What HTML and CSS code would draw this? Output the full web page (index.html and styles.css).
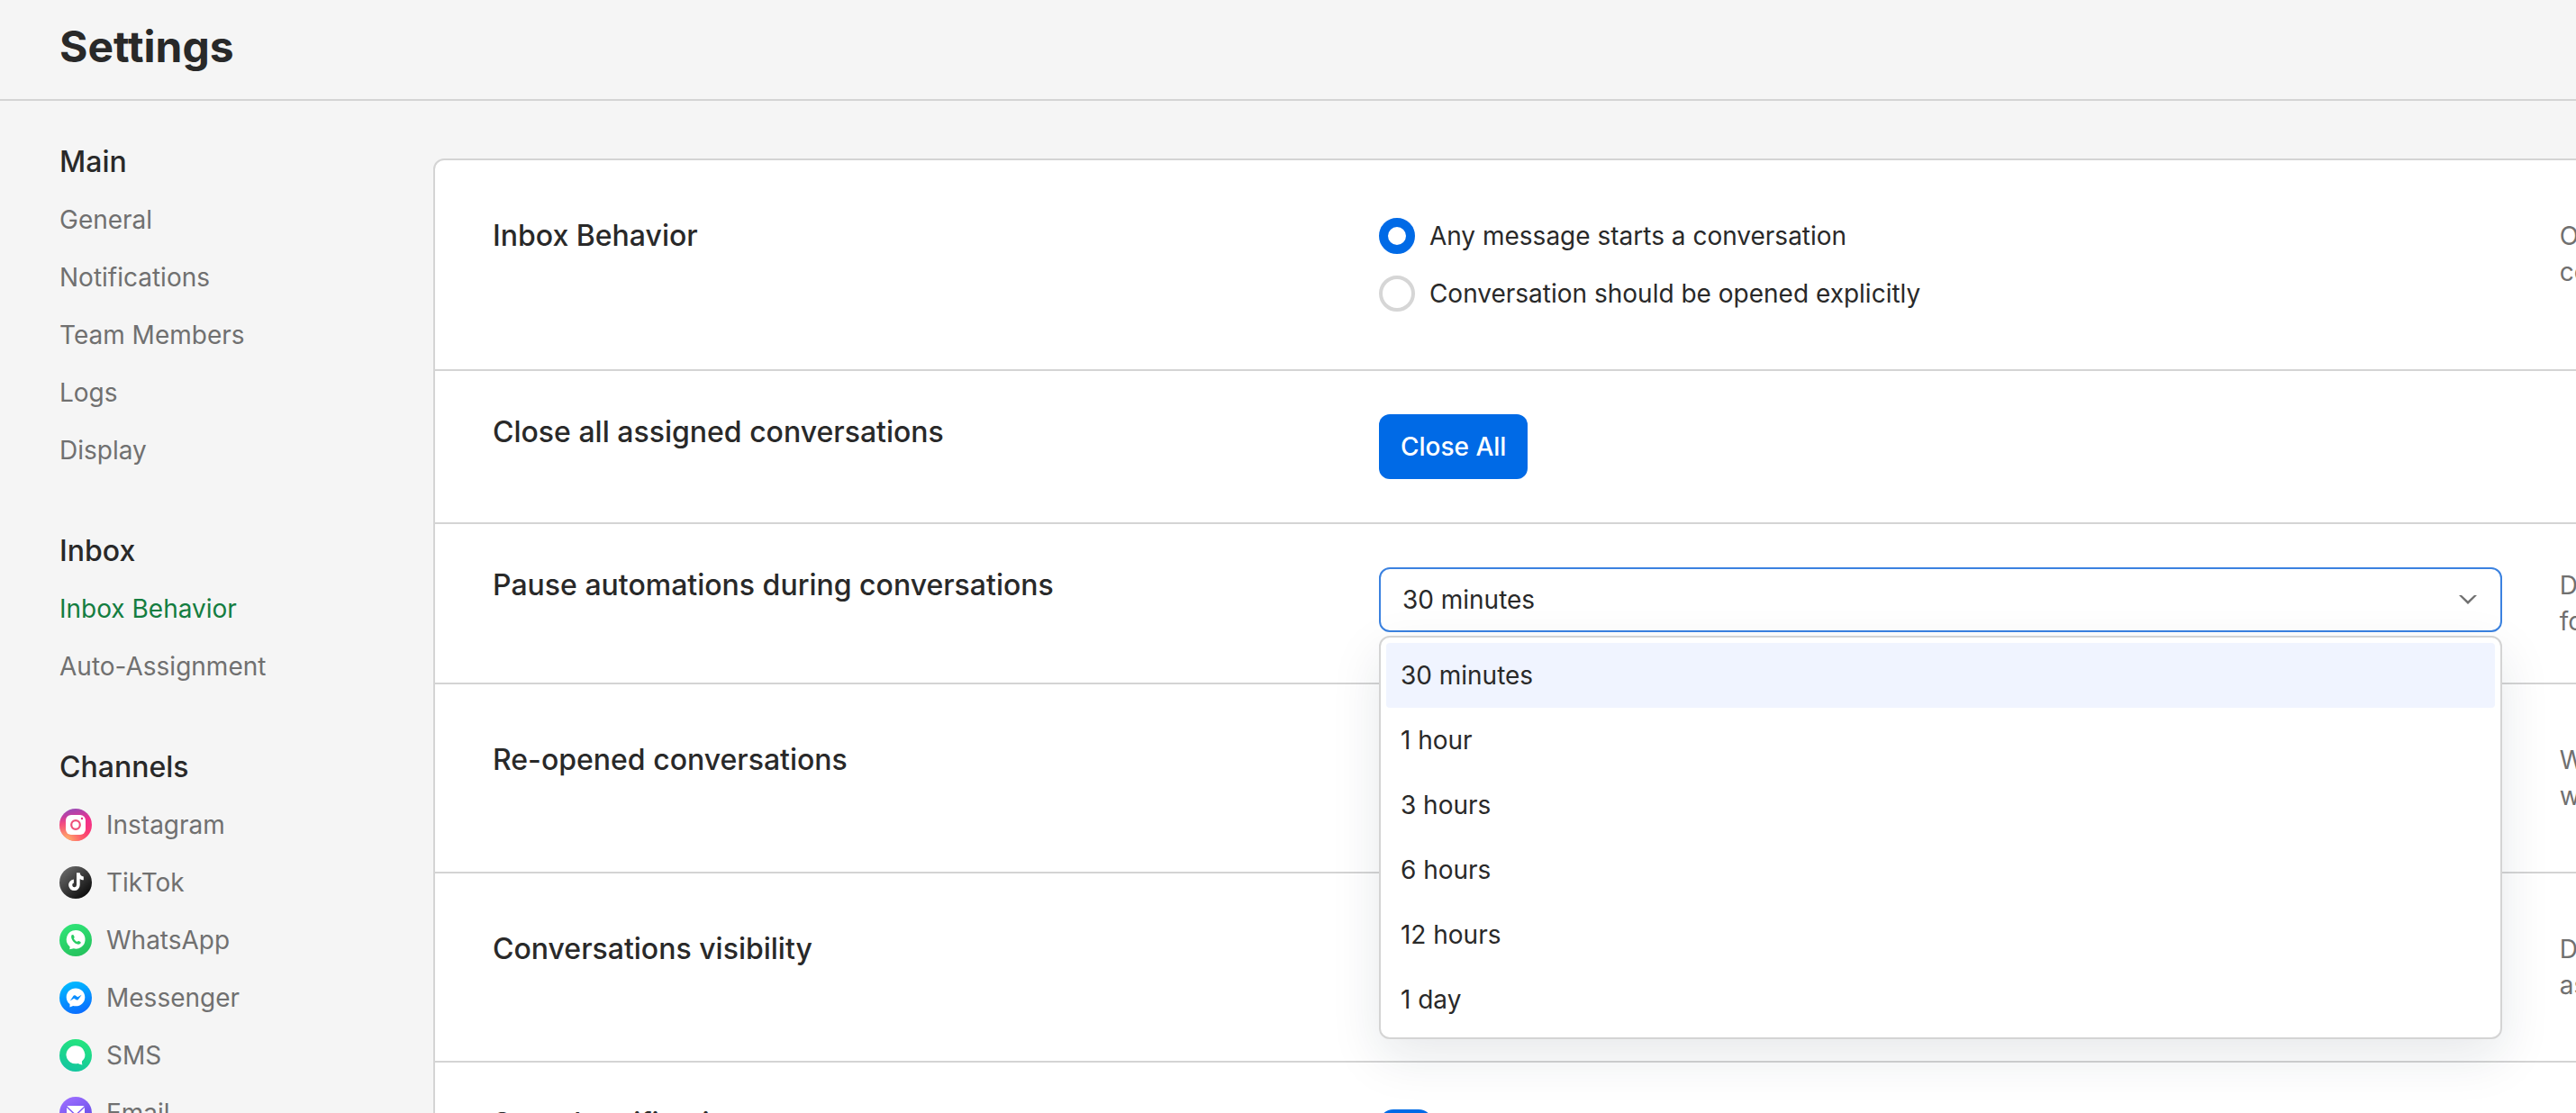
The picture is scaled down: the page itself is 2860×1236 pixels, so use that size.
FILE: index.html
```html
<!doctype html>
<html lang="en">
    <head>
        <meta charset="utf-8">
        <title>Settings</title>
        <link rel="stylesheet" href="styles.css">
    </head>
    <body>
        <header class="header">
            <h1>Settings</h1>
        </header>
        <div class="layout">
            <nav class="sidebar">
                <section>
                    <h2>Main</h2>
                    <a href="#general">General</a>
                    <a href="#notifications">Notifications</a>
                    <a href="#team">Team Members</a>
                    <a href="#logs">Logs</a>
                    <a href="#display">Display</a>
                </section>
                <section>
                    <h2>Inbox</h2>
                    <a href="#behavior" class="active">Inbox Behavior</a>
                    <a href="#assignment">Auto-Assignment</a>
                </section>
                <section>
                    <h2>Channels</h2>
                    <a href="#instagram">
                        <svg class="icon" viewBox="0 0 36 36">
                            <defs>
                                <linearGradient id="ig" x1="0.4" y1="0" x2="0.6" y2="1">
                                    <stop offset="0" stop-color="#9a4bb5" />
                                    <stop offset="0.4" stop-color="#f0308c" />
                                    <stop offset="1" stop-color="#ff3f6c" />
                                </linearGradient>
                                <radialGradient id="ig-warm" cx="0.2" cy="1" r="0.75">
                                    <stop offset="0" stop-color="#ffc46b" />
                                    <stop offset="1" stop-color="#ff8a5c" stop-opacity="0" />
                                </radialGradient>
                            </defs>
                            <circle cx="18" cy="18" r="18" fill="url(#ig)" />
                            <circle cx="18" cy="18" r="18" fill="url(#ig-warm)" />
                            <rect x="7" y="7" width="22" height="22" rx="6" fill="#fff" />
                            <circle cx="18" cy="18" r="4.8" fill="none" stroke="#ee4f78" stroke-width="2.2" />
                            <circle cx="25" cy="11" r="1.2" fill="#e03a8a" />
                        </svg>
                        Instagram
                    </a>
                    <a href="#tiktok">
                        <svg class="icon" viewBox="0 0 36 36">
                            <defs>
                                <linearGradient id="tt" x1="0.15" y1="0.1" x2="0.85" y2="0.9">
                                    <stop offset="0" stop-color="#666" />
                                    <stop offset="1" stop-color="#0c0c0c" />
                                </linearGradient>
                            </defs>
                            <circle cx="18" cy="18" r="18" fill="url(#tt)" />
                            <path d="M19 7.3h3.7c.2 2.4 1.8 4 4.1 4.2v3.8c-1.6 0-3-.5-4.1-1.3v6.8a6.3 6.3 0 1 1-6.8-6.3v4a2.4 2.4 0 1 0 3.1 2.3z" fill="#fff" />
                        </svg>
                        TikTok
                    </a>
                    <a href="#whatsapp">
                        <svg class="icon" viewBox="0 0 36 36">
                            <defs>
                                <linearGradient id="wa" x1="0.3" y1="0" x2="0.7" y2="1">
                                    <stop offset="0" stop-color="#2fe477" />
                                    <stop offset="1" stop-color="#25c15c" />
                                </linearGradient>
                            </defs>
                            <circle cx="18" cy="18" r="18" fill="url(#wa)" />
                            <path d="M18 7a10.3 10.3 0 1 1-2.2 20.3c-1.4.2-3 .7-4.6.9.4-1 .5-2 .3-3A10.3 10.3 0 0 1 18 7z" fill="#fff" />
                            <path d="M13.4 12.6c1-1 2-.9 2.5.2l.7 1.6c.3.8-.6 1.3-.7 1.9.7 1.6 1.9 2.8 3.6 3.5.7-.1 1.1-1.1 1.9-.8l1.6.8c1 .5 1 1.4.1 2.2-4 3-11.5-4.2-9.7-9.4z" fill="#27cb62" />
                        </svg>
                        WhatsApp
                    </a>
                    <a href="#messenger">
                        <svg class="icon" viewBox="0 0 36 36">
                            <defs>
                                <linearGradient id="ms" x1="0.3" y1="0" x2="0.6" y2="1">
                                    <stop offset="0" stop-color="#00bcff" />
                                    <stop offset="1" stop-color="#0a6cff" />
                                </linearGradient>
                            </defs>
                            <circle cx="18" cy="18" r="18" fill="url(#ms)" />
                            <path d="M18 7.5c5.8 0 10.3 4.3 10.3 9.9s-4.5 9.9-10.3 9.9c-1 0-1.9-.1-2.8-.4l-3.7 1.5v-3.3c-2.3-1.8-3.8-4.6-3.8-7.7 0-5.6 4.5-9.9 10.3-9.9z" fill="#fff" />
                            <path d="M11.8 21.5l3.6-5.5c.6-.8 1.5-.9 2.3-.4l2.5 1.7 4.4-2.6-3.7 5.2c-.6.8-1.5.9-2.3.4l-2.4-1.6z" fill="#0a8dff" />
                        </svg>
                        Messenger
                    </a>
                    <a href="#sms">
                        <svg class="icon" viewBox="0 0 36 36">
                            <defs>
                                <linearGradient id="sm" x1="0.65" y1="0" x2="0.35" y2="1">
                                    <stop offset="0" stop-color="#25e57d" />
                                    <stop offset="1" stop-color="#12c5a0" />
                                </linearGradient>
                            </defs>
                            <circle cx="18" cy="18" r="18" fill="url(#sm)" />
                            <path d="M18 7.3a10.3 10 0 0 1 7 17.3c-.2 1.3 0 2.7.4 4-1.7-.3-3.300-1-4.7-1.7A10.3 10 0 1 1 18 7.3z" fill="#fff" />
                        </svg>
                        SMS
                    </a>
                    <a href="#email">
                        <svg class="icon" viewBox="0 0 36 36">
                            <defs>
                                <linearGradient id="em" x1="0.3" y1="0" x2="0.8" y2="1">
                                    <stop offset="0" stop-color="#9b6dff" />
                                    <stop offset="1" stop-color="#5a45e0" />
                                </linearGradient>
                            </defs>
                            <circle cx="18" cy="18" r="18" fill="url(#em)" />
                            <rect x="8" y="10" width="20" height="16" rx="2" fill="#fff" />
                            <path d="M8 11l8.5 8c1 .8 2 .8 3 0l8.5-8M8 25.5l6.5-7M28 25.5l-6.5-7" fill="none" stroke="#7f5cf5" stroke-width="1.5" />
                        </svg>
                        Email
                    </a>
                </section>
            </nav>

            <main class="content">
                <div class="card">
                    <div class="row row-tall">
                        <h3 id="behavior-title">Inbox Behavior</h3>
                        <div class="radios" role="radiogroup" aria-labelledby="behavior-title">
                            <label>
                                <input type="radio" name="behavior" checked>
                                Any message starts a conversation
                            </label>
                            <label>
                                <input type="radio" name="behavior">
                                Conversation should be opened explicitly
                            </label>
                        </div>
                        <p class="help">Opens a<br>conversation</p>
                    </div>
                    <div class="row">
                        <h3>Close all assigned conversations</h3>
                        <div>
                            <button class="button" type="button">Close All</button>
                        </div>
                    </div>
                    <div class="row">
                        <h3><label for="pause">Pause automations during conversations</label></h3>
                        <div class="dropdown">
                            <select id="pause">
                                <option>30 minutes</option>
                                <option>1 hour</option>
                                <option>3 hours</option>
                                <option>6 hours</option>
                                <option>12 hours</option>
                                <option>1 day</option>
                            </select>
                            <svg class="chevron" viewBox="0 0 20 10">
                                <path d="M0 0h3l7 6.5 7-6.5h3l-10 10z" fill="#6f6f6f" />
                            </svg>
                            <ul class="menu" role="listbox">
                                <li class="selected" role="option" aria-selected="true">30 minutes</li>
                                <li role="option">1 hour</li>
                                <li role="option">3 hours</li>
                                <li role="option">6 hours</li>
                                <li role="option">12 hours</li>
                                <li role="option">1 day</li>
                            </ul>
                        </div>
                        <p class="help">Delay<br>for bots</p>
                    </div>
                    <div class="row row-tall">
                        <h3>Re-opened conversations</h3>
                        <div></div>
                        <p class="help">What to do<br>when reopened</p>
                    </div>
                    <div class="row row-tall">
                        <h3>Conversations visibility</h3>
                        <div></div>
                        <p class="help">Define<br>assignees</p>
                    </div>
                    <div class="row">
                        <h3><label for="sound">Sound notifications</label></h3>
                        <div>
                            <input class="toggle" id="sound" type="checkbox" checked>
                        </div>
                    </div>
                </div>
            </main>
        </div>
    </body>
</html>
```
FILE: styles.css
```css
* {
    box-sizing: border-box;
}

body {
    display: flex;
    flex-direction: column;
    height: 100vh;
    margin: 0;
    overflow: hidden;
    background: #f5f5f5;
    color: #292929;
    font-family: Inter, sans-serif;
    font-size: 28px;
    line-height: 40px;
}

h1,
h2,
h3,
p,
ul {
    margin: 0;
    padding: 0;
}

h2,
h3 {
    font-size: 32px;
    font-weight: 500;
}

.header {
    flex: none;
    padding: 20px 66px 26px;
    border-bottom: 2px solid #d4d4d4;
}

.header h1 {
    font-size: 48px;
    font-weight: 700;
    line-height: 64px;
}

.layout {
    display: flex;
    flex: 1;
    min-height: 0;
}

/* sidebar */
.sidebar {
    display: flex;
    flex: none;
    flex-direction: column;
    gap: 72px;
    width: 481px;
    padding: 48px 0 0 66px;
}

.sidebar section {
    display: flex;
    flex-direction: column;
    gap: 24px;
}

.sidebar a {
    display: flex;
    align-items: center;
    gap: 16px;
    color: #707070;
    text-decoration: none;
}

.sidebar a.active {
    color: #147d40;
}

.icon {
    width: 36px;
    height: 36px;
}

/* settings card, wider than the view and cut off on the right */
.content {
    flex: 1;
    min-width: 0;
    padding-top: 64px;
}

.card {
    width: 125%;
    background: #fff;
    border: 2px solid #d4d4d4;
    border-radius: 12px;
}

.row {
    display: grid;
    grid-template-columns: 920fr 1247fr 547fr;
    gap: 64px;
    padding: 48px 64px;
    border-bottom: 2px solid #d4d4d4;
}

.row-tall {
    padding: 64px;
}

.help {
    color: #707070;
    white-space: nowrap;
}

.radios {
    display: flex;
    flex-direction: column;
    gap: 24px;
}

.radios label {
    display: flex;
    align-items: center;
    gap: 16px;
}

.radios input {
    appearance: none;
    width: 40px;
    height: 40px;
    margin: 0;
    border: 4px solid #d6d6d6;
    border-radius: 50%;
    background: #fff;
}

.radios input:checked {
    border: 10px solid #006ae6;
}

.button {
    display: block;
    height: 72px;
    padding: 0 24px;
    border: none;
    border-radius: 12px;
    background: #006ae6;
    color: #fff;
    font: inherit;
    font-weight: 500;
}

.dropdown {
    position: relative;
    height: 72px;
}

.dropdown select {
    appearance: none;
    display: block;
    width: 100%;
    height: 72px;
    padding: 0 24px;
    border: 2px solid #3b82e0;
    border-radius: 12px;
    background: #fff;
    color: inherit;
    font: inherit;
}

.chevron {
    position: absolute;
    top: 31px;
    right: 28px;
    width: 20px;
    height: 10px;
    pointer-events: none;
}

.menu {
    position: absolute;
    z-index: 1;
    top: 76px;
    left: 0;
    width: 100%;
    padding: 6px;
    border: 2px solid #d4d4d4;
    border-radius: 12px;
    background: #fff;
    box-shadow: 0 20px 56px rgba(23, 37, 63, 0.1);
    list-style: none;
}

.menu li {
    padding: 16px;
    border-radius: 4px;
}

.menu .selected {
    background: #f0f4ff;
}

.toggle {
    appearance: none;
    display: block;
    width: 60px;
    height: 32px;
    margin: 4px 0;
    border-radius: 16px;
    background: radial-gradient(circle at 44px 16px, #fff 11px, #006ae6 12px);
}
```
